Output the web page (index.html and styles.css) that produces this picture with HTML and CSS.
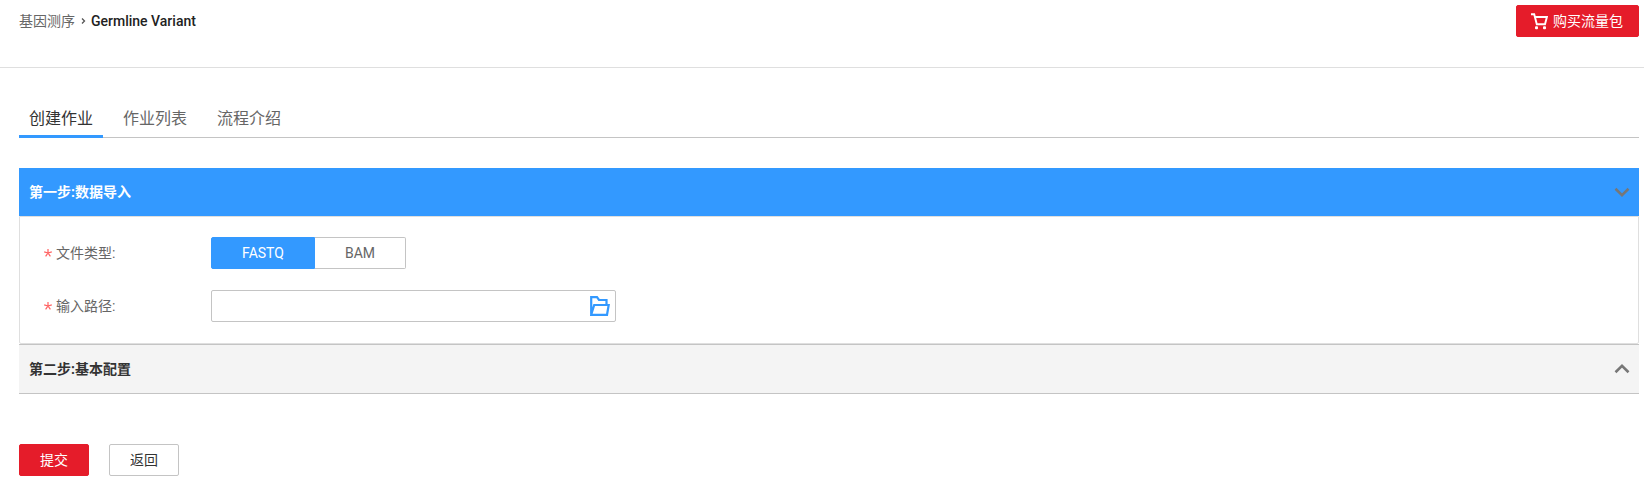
FILE: index.html
```html
<!DOCTYPE html>
<html lang="zh-CN">
<head>
<meta charset="utf-8">
<title>Germline Variant</title>
<link rel="stylesheet" href="styles.css">
</head>
<body>
<header class="topbar">
  <nav class="crumbs">
    <a class="crumb-link">基因测序</a>
    <svg class="crumb-arrow" width="5" height="6" viewBox="0 0 5 6"><path d="M1 .5 3.500 3 1 5.500" fill="none" stroke="#555" stroke-width="1.300"/></svg>
    <span class="crumb-current">Germline Variant</span>
  </nav>
  <button class="btn btn-primary btn-buy">
    <svg width="17" height="17" viewBox="0 0 17 17"><path d="M0 1.200H3.200L5.800 11.300H14L15.900 4H4" fill="none" stroke="#fff" stroke-width="1.900"/><rect x="4" y="13.300" width="3" height="3" rx="1" fill="#fff"/><rect x="12" y="13.300" width="3" height="3" rx="1" fill="#fff"/></svg>
    <span>购买流量包</span>
  </button>
</header>
<main class="content">
  <nav class="tabs">
    <a class="tab tab-active">创建作业</a>
    <a class="tab">作业列表</a>
    <a class="tab">流程介绍</a>
  </nav>
  <section class="step">
    <div class="step-head step-head-open">
      <span>第一步:数据导入</span>
      <svg width="16" height="10" viewBox="0 0 16 10"><path d="M1.500 1.800 8 8.100 14.500 1.800" fill="none" stroke="#777" stroke-width="2.600"/></svg>
    </div>
    <div class="step-body">
      <div class="row">
        <div class="label"><svg class="required" width="8" height="8" viewBox="0 0 8 8"><path d="M4 0V4M.2 2.900 4 4 7.800 2.900M1.600 7.400 4 4 6.400 7.400" fill="none" stroke="#ff5f5f" stroke-width="1.200"/></svg><span>文件类型:</span></div>
        <div class="segment">
          <button class="seg seg-on">FASTQ</button>
          <button class="seg seg-off">BAM</button>
        </div>
      </div>
      <div class="row">
        <div class="label"><svg class="required" width="8" height="8" viewBox="0 0 8 8"><path d="M4 0V4M.2 2.900 4 4 7.800 2.900M1.600 7.400 4 4 6.400 7.400" fill="none" stroke="#ff5f5f" stroke-width="1.200"/></svg><span>输入路径:</span></div>
        <div class="path-field">
          <svg width="20" height="20" viewBox="0 0 20 20"><path d="M1.200 19V1.200H7L9 4H16.500V8.500M1.200 18.800 4.200 9H18.700L17 18.800Z" fill="none" stroke="#39f" stroke-width="2.200"/></svg>
        </div>
      </div>
    </div>
  </section>
  <section class="step">
    <div class="step-head step-head-closed">
      <span>第二步:基本配置</span>
      <svg width="16" height="10" viewBox="0 0 16 10"><path d="M1.500 8.200 8 1.900 14.500 8.200" fill="none" stroke="#777" stroke-width="2.600"/></svg>
    </div>
  </section>
  <div class="actions">
    <button class="btn btn-primary"><span>提交</span></button>
    <button class="btn"><span>返回</span></button>
  </div>
</main>
</body>
</html>
```
FILE: styles.css
```css
* { box-sizing: border-box; }
body, button {
  font-family: Roboto, "Noto Sans CJK SC", sans-serif;
  font-size: 14px;
}
body {
  margin: 0;
  height: 492px;
  overflow: hidden;
  background: #fff;
  color: #666;
}
svg { display: block; flex: none; }
.topbar {
  display: flex;
  align-items: flex-start;
  justify-content: space-between;
  height: 68px;
  padding: 5px 5px 0 19px;
  border-bottom: 1px solid #dfdfdf;
}
.crumbs { display: flex; align-items: center; height: 32px; }
.crumb-link, .btn span, .label span, .step-head span { padding-bottom: 2px; }
.crumb-arrow { margin: 0 5px 0 6px; }
.crumb-current { color: #222; font-weight: 500; }
.btn {
  display: flex;
  align-items: center;
  justify-content: center;
  width: 70px;
  height: 32px;
  padding: 0;
  border: 1px solid #c4c4c4;
  border-radius: 2px;
  background: #fff;
  color: #333;
}
.btn-primary { border-color: #e51c2a; background: #e51c2a; color: #fff; }
.btn-buy { gap: 5px; width: 123px; padding-right: 1px; }
.content { padding: 30px 5px 0 19px; }
.tabs {
  display: flex;
  gap: 10px;
  height: 40px;
  border-bottom: 1px solid #c4c4c4;
}
.tab {
  height: 39px;
  padding: 0 10px;
  line-height: 42px;
  font-size: 16px;
}
.tab-active { height: 39px; border-bottom: 3px solid #39f; color: #333; }
.tabs .tab-active { height: 40px; }
.tabs + .step { margin-top: 30px; }
.step-head {
  display: flex;
  align-items: center;
  justify-content: space-between;
  padding: 0 9px 0 10px;
  font-weight: 700;
}
.step-head-open { height: 48px; background: #39f; color: #fff; }
.step-head-closed {
  height: 50px;
  border-top: 1px solid #c4c4c4;
  border-bottom: 1px solid #c4c4c4;
  background: #f4f4f4;
  color: #333;
}
.step-body {
  display: flex;
  flex-direction: column;
  gap: 21px;
  height: 128px;
  padding: 20px 24px;
  border: 1px solid #dfdfdf;
  border-radius: 0 0 2px 2px;
}
.row { display: flex; height: 32px; }
.label { display: flex; align-items: center; gap: 4px; width: 167px; }
.segment { display: flex; }
.seg { height: 32px; padding: 0; border: 1px solid #c4c4c4; }
.seg-on {
  width: 104px;
  border-color: #39f;
  border-radius: 2px 0 0 2px;
  background: #39f;
  color: #fff;
}
.seg-off {
  width: 91px;
  border-left: 0;
  border-radius: 0 2px 2px 0;
  background: #fff;
  color: #666;
}
.path-field {
  display: flex;
  align-items: center;
  justify-content: flex-end;
  width: 405px;
  padding-right: 5px;
  border: 1px solid #c4c4c4;
  border-radius: 2px;
}
.actions { display: flex; gap: 20px; margin-top: 50px; }
```
